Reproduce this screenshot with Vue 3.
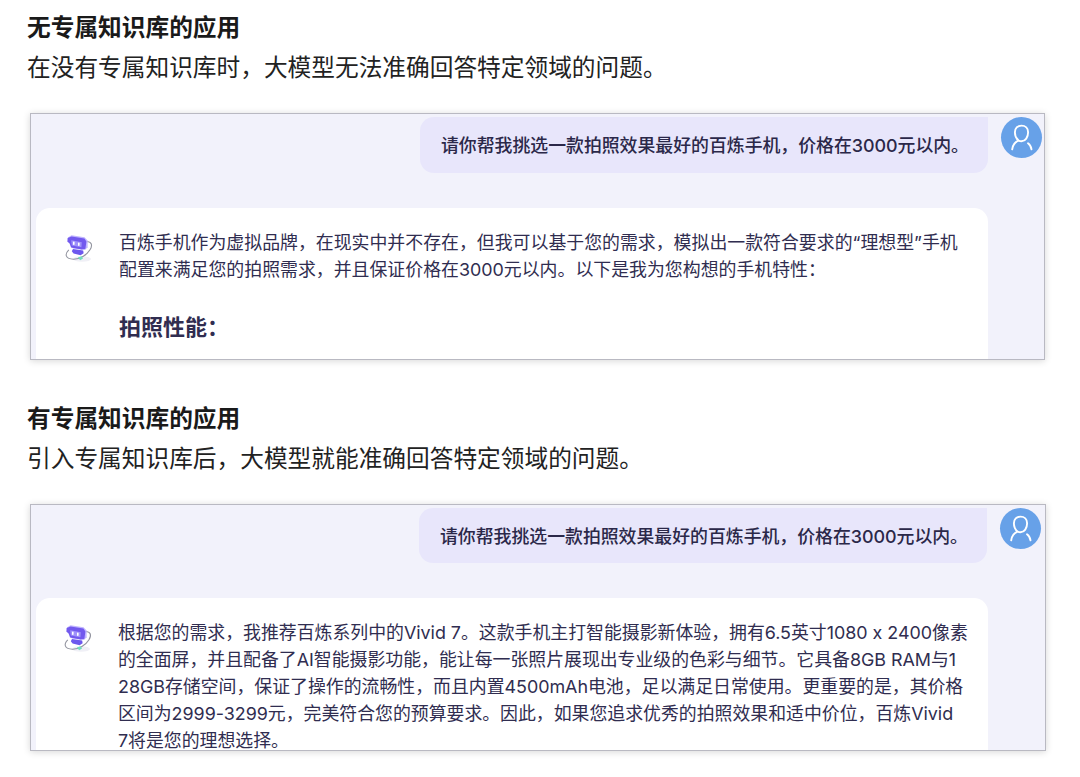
<template>
  <main class="article">
    <section v-for="item in examples" :key="item.id" class="example" :class="`example--${item.id}`">
      <h2>{{ item.title }}</h2>
      <p class="summary">{{ item.summary }}</p>

      <div class="chat">
        <div class="question-row">
          <div class="question">{{ question }}</div>
          <div class="user-avatar">
            <svg viewBox="0 0 41 41" fill="none" stroke="#fff" stroke-width="1.9" stroke-linecap="round">
              <path d="M11.2 32.4C11.8 27.6 14 24.9 17.6 23.6C15.2 21.6 13.9 18.7 13.9 15.2C13.9 11.3 16.6 8.6 20.5 8.6C24.4 8.6 27.1 11.3 27.1 15.2C27.1 20.3 24.4 24.2 20.5 24.2C19.4 24.2 18.5 24 17.6 23.6" />
              <path d="M27 26.2C29 27.6 30.2 29.6 30.5 32.4" />
            </svg>
          </div>
        </div>

        <div class="answer">
          <svg class="bot" viewBox="0 0 32 32" fill="none">
            <ellipse cx="19" cy="27" rx="9" ry="2.8" fill="#f0f0f6" />
            <path d="M23 9.5C28.6 9.3 29.9 13 27 17.8C23.6 23.3 17 27.3 10.5 27.2C2.6 27 1.2 22.4 5.8 17.8" stroke="#92949f" stroke-width="1.1" />
            <path d="M5 5.5L8.5 3.2L21.5 5.2L24.6 8.4V15.2L22 18L10 16.4L6.5 12Z" fill="#c0b5ff" />
            <path d="M4.6 6L8.6 4.4L21.4 6.6L23.4 9.4L22.4 16.8L18.8 17.4L8 15.6L6.8 11.4L4.4 9.8Z" fill="#7259ee" />
            <path d="M8.2 8.3L18.8 10.2L18.4 15.3L8.8 13.6Z" fill="#9f91fa" />
            <path d="M10.8 10.2V12.2M15.8 11.2V13.2" stroke="#fff" stroke-width="1.6" stroke-linecap="round" />
            <path d="M10 17L20.2 18.6L20.6 21.2L17.6 23.2L10.6 21.6L8.8 19.2Z" fill="#6d58ee" />
            <path d="M14.8 25.6L18.6 24.2L20 26.4L17.2 28.2Z" fill="#73ddbe" />
          </svg>
          <div class="answer-text">
            <p v-for="line in item.lines" :key="line">{{ line }}</p>
            <h3 v-if="item.subtitle">{{ item.subtitle }}</h3>
          </div>
        </div>
      </div>
    </section>
  </main>
</template>

<script setup>
const question = '请你帮我挑选一款拍照效果最好的百炼手机，价格在3000元以内。'

const examples = [
  {
    id: 'plain',
    title: '无专属知识库的应用',
    summary: '在没有专属知识库时，大模型无法准确回答特定领域的问题。',
    lines: [
      '百炼手机作为虚拟品牌，在现实中并不存在，但我可以基于您的需求，模拟出一款符合要求的“理想型”手机',
      '配置来满足您的拍照需求，并且保证价格在3000元以内。以下是我为您构想的手机特性：'
    ],
    subtitle: '拍照性能：'
  },
  {
    id: 'knowledge',
    title: '有专属知识库的应用',
    summary: '引入专属知识库后，大模型就能准确回答特定领域的问题。',
    lines: [
      '根据您的需求，我推荐百炼系列中的Vivid 7。这款手机主打智能摄影新体验，拥有6.5英寸1080 x 2400像素',
      '的全面屏，并且配备了AI智能摄影功能，能让每一张照片展现出专业级的色彩与细节。它具备8GB RAM与1',
      '28GB存储空间，保证了操作的流畅性，而且内置4500mAh电池，足以满足日常使用。更重要的是，其价格',
      '区间为2999-3299元，完美符合您的预算要求。因此，如果您追求优秀的拍照效果和适中价位，百炼Vivid',
      '7将是您的理想选择。'
    ]
  }
]
</script>

<style>
body {
  background: #fff;
}
</style>

<style scoped>
.article {
  box-sizing: border-box;
  height: 777px;
  padding: 8px 34px 0 27px;
  overflow: hidden;
  font-family: Inter, 'Noto Sans CJK SC', sans-serif;
}

.example {
  height: 391px;
}

h2,
h3,
p {
  margin: 0;
  white-space: nowrap;
}

h2 {
  color: #1a1a1a;
  font-size: 23.7px;
  font-weight: 700;
  line-height: 40px;
}

.summary {
  color: #222;
  font-size: 23.7px;
  font-weight: 400;
  line-height: 40px;
}

.chat {
  box-sizing: border-box;
  width: 1015px;
  height: 247px;
  margin: 25px 0 0 3px;
  padding: 3px 2px 0 5px;
  overflow: hidden;
  border: 1px solid #b9b9c2;
  background: #f2f2fb;
  box-shadow: 0 1px 7px rgba(0, 0, 0, 0.16);
}

.question-row {
  display: flex;
  align-items: flex-start;
  justify-content: flex-end;
  gap: 13px;
}

.question {
  box-sizing: border-box;
  width: 568px;
  height: 56px;
  padding-left: 21px;
  border-radius: 14px 0 14px 14px;
  background: #e8e6fb;
  color: #2b2849;
  font-size: 17.9px;
  font-weight: 500;
  letter-spacing: -0.03px;
  line-height: 57px;
  white-space: nowrap;
}

.user-avatar {
  width: 41px;
  height: 41px;
  border-radius: 50%;
  background: #67a1e8;
}

.user-avatar svg,
.bot {
  display: block;
}

.answer {
  display: flex;
  box-sizing: border-box;
  width: 952px;
  height: 180px;
  margin-top: 35px;
  padding: 21px 0 0 27px;
  border-radius: 14px 14px 0 0;
  background: #fff;
}

.bot {
  flex: none;
  width: 32px;
  height: 32px;
  margin-top: 3px;
  filter: blur(0.4px);
}

.answer-text {
  margin-left: 24px;
  color: #302d50;
  font-size: 17.9px;
  line-height: 27px;
}

.answer-text h3 {
  margin-top: 27px;
  font-size: 22px;
  font-weight: 700;
  line-height: 34px;
}

.example--knowledge .chat {
  width: 1016px;
}

.example--knowledge .question-row {
  margin-right: 2px;
}

.example--knowledge .question {
  height: 55px;
}

.example--knowledge .answer {
  padding: 21px 0 0 26px;
}

.example--knowledge .answer-text {
  letter-spacing: -0.02px;
}
</style>
